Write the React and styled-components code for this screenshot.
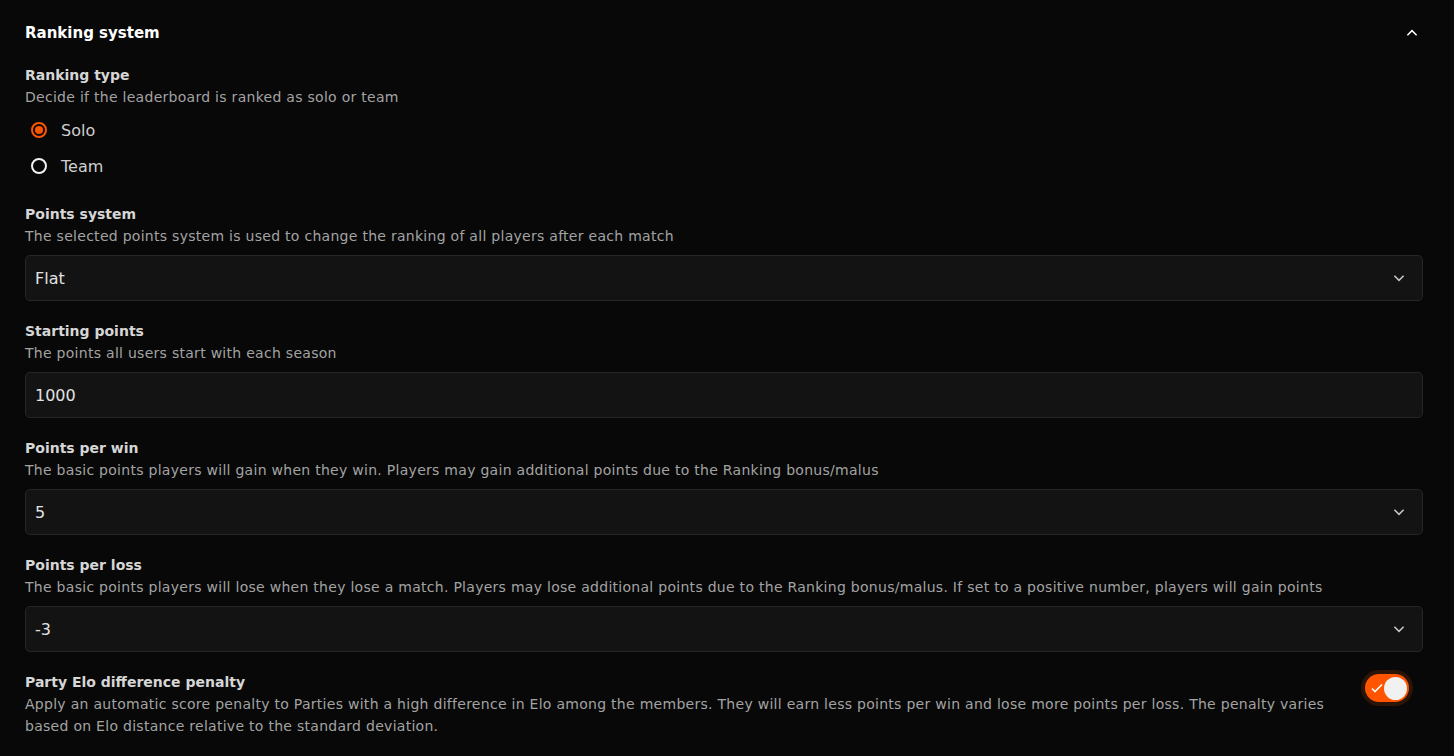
import styled, { createGlobalStyle } from "styled-components";

const GlobalStyle = createGlobalStyle`
  html, body {
    margin: 0;
    background: #080808;
  }
  body {
    font-family: "DejaVu Sans", "Noto Sans", sans-serif;
    color: #d8d8d8;
  }
`;

const fields = [
  {
    title: "Points system",
    desc: "The selected points system is used to change the ranking of all players after each match",
    value: "Flat",
    select: true,
  },
  {
    title: "Starting points",
    desc: "The points all users start with each season",
    value: "1000",
  },
  {
    title: "Points per win",
    desc: "The basic points players will gain when they win. Players may gain additional points due to the Ranking bonus/malus",
    value: "5",
    select: true,
  },
  {
    title: "Points per loss",
    desc: "The basic points players will lose when they lose a match. Players may lose additional points due to the Ranking bonus/malus. If set to a positive number, players will gain points",
    value: "-3",
    select: true,
  },
];

function Chevron({ up }) {
  return (
    <svg width="14" height="14" viewBox="0 0 24 24" fill="none" stroke="currentColor" strokeWidth="2.6" strokeLinecap="square" strokeLinejoin="miter">
      {up ? <path d="M5 15l7-7 7 7" /> : <path d="M5 9l7 7 7-7" />}
    </svg>
  );
}

export default function App() {
  return (
    <>
      <GlobalStyle />
      <Panel>
        <Header>
          <h2>Ranking system</h2>
          <HeaderIcon>
            <Chevron up />
          </HeaderIcon>
        </Header>

        <Field>
          <Title>Ranking type</Title>
          <Desc>Decide if the leaderboard is ranked as solo or team</Desc>
          <RadioGroup>
            <RadioRow>
              <Radio $checked />
              <span>Solo</span>
            </RadioRow>
            <RadioRow>
              <Radio />
              <span>Team</span>
            </RadioRow>
          </RadioGroup>
        </Field>

        {fields.map((f) => (
          <Field key={f.title}>
            <Title>{f.title}</Title>
            <Desc>{f.desc}</Desc>
            <Input>
              <span>{f.value}</span>
              {f.select && (
                <SelectIcon>
                  <Chevron />
                </SelectIcon>
              )}
            </Input>
          </Field>
        ))}

        <ToggleField>
          <div>
            <Title>Party Elo difference penalty</Title>
            <Desc>
              Apply an automatic score penalty to Parties with a high difference in Elo among the members. They will earn less points per win and lose more points per loss. The penalty varies based on Elo distance relative to the standard deviation.
            </Desc>
          </div>
          <Toggle>
            <svg width="12" height="10" viewBox="0 0 12 10" fill="none" stroke="#fff" strokeWidth="1.6">
              <path d="M1 5.5l3 3L11 1.5" />
            </svg>
            <Knob />
          </Toggle>
        </ToggleField>
      </Panel>
    </>
  );
}

const Panel = styled.section`
  padding: 22px 31px 0 25px;
  display: flex;
  flex-direction: column;
`;

const Header = styled.div`
  display: flex;
  align-items: center;
  justify-content: space-between;
  margin-bottom: 20px;

  h2 {
    margin: 0;
    font-size: 15px;
    line-height: 22px;
    font-weight: 700;
    color: #fff;
  }
`;

const HeaderIcon = styled.div`
  display: flex;
  color: #fff;
  margin-right: 4px;
`;

const Field = styled.div`
  display: flex;
  flex-direction: column;
  margin-bottom: 19px;
`;

const Title = styled.div`
  font-size: 14px;
  line-height: 22px;
  font-weight: 700;
  color: #d6d6d6;
`;

const Desc = styled.div`
  font-size: 14px;
  line-height: 22px;
  letter-spacing: 0.28px;
  color: #a3a3a3;
`;

const RadioGroup = styled.div`
  display: flex;
  flex-direction: column;
  margin-top: 4px;
`;

const RadioRow = styled.label`
  display: flex;
  align-items: center;
  gap: 14px;
  height: 36px;
  padding-left: 6px;
  font-size: 16px;
  color: #cfcfcf;
`;

const Radio = styled.span`
  width: 16px;
  height: 16px;
  box-sizing: border-box;
  border-radius: 50%;
  border: 2px solid ${(p) => (p.$checked ? "#ff5500" : "#f2f2f2")};
  display: grid;
  place-items: center;

  &::after {
    content: "";
    width: 8px;
    height: 8px;
    border-radius: 50%;
    background: ${(p) => (p.$checked ? "#ff5500" : "transparent")};
  }
`;

const Input = styled.div`
  margin-top: 8px;
  height: 46px;
  box-sizing: border-box;
  border: 1px solid #262626;
  border-radius: 5px;
  background: #131313;
  display: flex;
  align-items: center;
  justify-content: space-between;
  padding: 0 16px 0 9px;
  font-size: 16px;
  color: #e2e2e2;
`;

const SelectIcon = styled.div`
  display: flex;
  color: #c8c8c8;
`;

const ToggleField = styled.div`
  display: flex;
  align-items: flex-start;
  justify-content: space-between;
  gap: 24px;
  padding-right: 14px;
`;

const Toggle = styled.div`
  flex-shrink: 0;
  margin-top: 3px;
  width: 44px;
  height: 28px;
  box-sizing: border-box;
  border-radius: 14px;
  background: #ff5500;
  box-shadow: 0 0 0 4px #2b1408;
  display: flex;
  align-items: center;
  justify-content: space-between;
  padding: 0 2px 0 6px;
`;

const Knob = styled.span`
  width: 23px;
  height: 23px;
  border-radius: 50%;
  background: #f1f1f1;
`;
